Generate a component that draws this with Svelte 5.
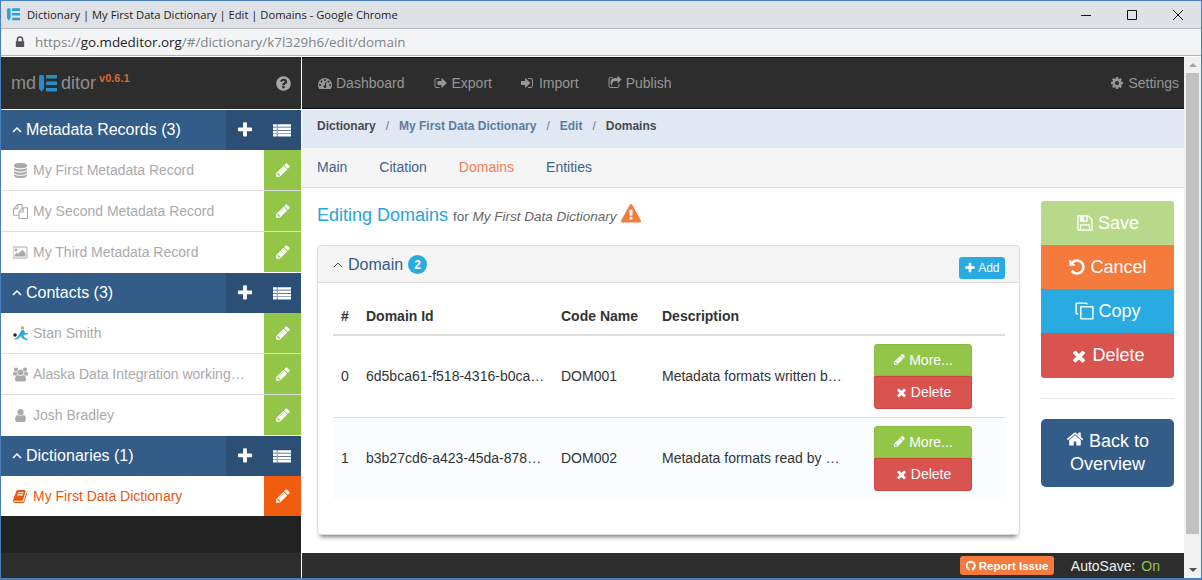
<script>
	// font awesome 4 shapes, 1792 grid unless noted
	const icons = {
		plus: 'M1600 736v192q0 40-28 68t-68 28h-416v416q0 40-28 68t-68 28h-192q-40 0-68-28t-28-68v-416h-416q-40 0-68-28t-28-68v-192q0-40 28-68t68-28h416v-416q0-40 28-68t68-28h192q40 0 68 28t28 68v416h416q40 0 68 28t28 68z',
		times: 'M1490 1322q0 40-28 68l-136 136q-28 28-68 28t-68-28l-294-294-294 294q-28 28-68 28t-68-28l-136-136q-28-28-28-68t28-68l294-294-294-294q-28-28-28-68t28-68l136-136q28-28 68-28t68 28l294 294 294-294q28-28 68-28t68 28l136 136q28 28 28 68t-28 68l-294 294 294 294q28 28 28 68z',
		pencil: 'M491 1536l91-91-235-235-91 91v107h128v128h107zm523-928q0-22-22-22-10 0-17 7l-542 542q-7 7-7 17 0 22 22 22 10 0 17-7l542-542q7-7 7-17zm-54-192l416 416-832 832h-416v-416zm683 96q0 53-37 90l-166 166-416-416 166-165q36-38 90-38 53 0 91 38l235 234q37 39 37 91z',
		home: 'M1472 992v480q0 26-19 45t-45 19h-384v-384h-256v384h-384q-26 0-45-19t-19-45v-480q0-1 .5-3t.5-3l575-474 575 474q1 2 1 6zm223-69l-62 74q-8 9-21 11h-3q-13 0-21-7l-692-577-692 577q-12 8-24 7-13-2-21-11l-62-74q-8-10-7-23.5t11-21.5l719-599q32-26 76-26t76 26l244 204v-195q0-14 9-23t23-9h192q14 0 23 9t9 23v408l219 182q10 8 11 21.5t-7 23.5z',
		warning: 'M1024 1375v-190q0-14-9.5-23.5t-22.5-9.5h-192q-13 0-22.5 9.5t-9.5 23.5v190q0 14 9.5 23.5t22.5 9.5h192q13 0 22.5-9.5t9.5-23.5zm-2-374l18-459q0-12-10-19-13-11-24-11h-220q-11 0-24 11-10 7-10 21l17 457q0 10 10 16.5t24 6.5h185q14 0 23.5-6.5t10.5-16.5zm-14-934l768 1408q35 63-2 126-17 29-46.5 46t-63.5 17h-1536q-34 0-63.5-17t-46.5-46q-37-63-2-126l768-1408q17-31 47-49t65-18 65 18 47 49z',
		user: 'M1536 1399q0 109-62.5 187t-150.5 78h-854q-88 0-150.5-78t-62.5-187q0-85 8.5-160.5t31.5-152 58.5-131 94-89 134.5-34.5q131 128 313 128t313-128q76 0 134.5 34.5t94 89 58.5 131 31.5 152 8.5 160.5zm-256-887q0 159-112.5 271.5t-271.5 112.5-271.5-112.5-112.5-271.5 112.5-271.5 271.5-112.5 271.5 112.5 112.5 271.5z',
		question: 'M1024 1376v-192q0-14-9-23t-23-9h-192q-14 0-23 9t-9 23v192q0 14 9 23t23 9h192q14 0 23-9t9-23zm256-672q0-88-55.5-163t-138.5-116-170-41q-243 0-371 213-15 24 8 42l132 100q7 6 19 6 16 0 25-12 53-68 86-92 34-24 86-24 48 0 85.5 26t37.5 59q0 38-20 61t-68 45q-63 28-115.5 86.5t-52.5 125.5v36q0 14 9 23t23 9h192q14 0 23-9t9-23q0-19 21.5-49.5t54.5-49.5q32-18 49-28.5t46-35 44.5-48 28-60.5 12.5-81zm384 192q0 209-103 385.5t-279.5 279.5-385.5 103-385.5-103-279.5-279.5-103-385.5 103-385.5 279.5-279.5 385.5-103 385.5 103 279.5 279.5 103 385.5z',
		database: 'M896 768q237 0 443-43t325-127v170q0 69-103 128t-280 93.5-385 34.5-385-34.5-280-93.5-103-128v-170q119 84 325 127t443 43zm0 768q237 0 443-43t325-127v170q0 69-103 128t-280 93.5-385 34.5-385-34.5-280-93.5-103-128v-170q119 84 325 127t443 43zm0-384q237 0 443-43t325-127v170q0 69-103 128t-280 93.5-385 34.5-385-34.5-280-93.5-103-128v-170q119 84 325 127t443 43zm0-1152q208 0 385 34.5t280 93.5 103 128v128q0 69-103 128t-280 93.5-385 34.5-385-34.5-280-93.5-103-128v-128q0-69 103-128t280-93.5 385-34.5z',
		undo: 'M1664 896q0 156-61 298t-164 245-245 164-298 61q-172 0-327-72.5t-264-204.5q-7-10-6.5-22.5t8.5-20.5l137-138q10-9 25-9 16 2 23 12 73 95 179 147t225 52q104 0 198.5-40.5t163.5-109.5 109.5-163.5 40.5-198.5-40.5-198.5-109.5-163.5-163.5-109.5-198.5-40.5q-98 0-188 35.5t-160 101.5l137 138q31 30 14 69-17 40-59 40h-448q-26 0-45-19t-19-45v-448q0-42 40-59 39-17 69 14l130 129q107-101 244.5-156.5t284.5-55.5q156 0 298 61t245 164 164 245 61 298z',
		book: 'M1639 478q40 57 18 129l-275 906q-19 64-76.5 107.5t-122.5 43.5h-923q-77 0-148.5-53.5t-99.5-131.5q-24-67-2-127 0-4 3-27t4-37q1-8-3-21.5t-3-19.5q2-11 8-21t16.5-23.5 16.5-23.5q23-38 45-91.5t30-91.5q3-10 .5-30t-.5-28q3-11 17-28t17-23q21-36 42-92t25-90q1-9-2.5-32t.5-28q4-13 22-30.5t22-22.5q19-26 42.5-84.5t27.5-96.5q1-8-3-25.5t-2-26.5q2-8 9-18t18-23 17-21q8-12 16.5-30.5t15-35 16-36 19.5-32 26.5-23.5 36-11.5 47.5 5.5l-1 3q38-9 51-9h761q74 0 114 56t18 130l-274 906q-36 119-71.5 153.5t-128.5 34.5h-869q-27 0-38 15-11 16-1 43 24 70 144 70h923q29 0 56-15.5t35-41.5l300-987q7-22 5-57 38 15 59 43zm-1064 2q-4 13 2 22.5t20 9.5h608q13 0 25.5-9.5t16.5-22.5l21-64q4-13-2-22.5t-20-9.5h-608q-13 0-25.5 9.5t-16.5 22.5zm-83 256q-4 13 2 22.5t20 9.5h608q13 0 25.5-9.5t16.5-22.5l21-64q4-13-2-22.5t-20-9.5h-608q-13 0-25.5 9.5t-16.5 22.5z',
		cog: 'M1152 896q0-106-75-181t-181-75-181 75-75 181 75 181 181 75 181-75 75-181zm512-109v222q0 12-8 23t-20 13l-185 28q-19 54-39 91 35 50 107 138 10 12 10 25t-9 23q-27 37-99 108t-94 71q-12 0-26-9l-138-108q-44 23-91 38-16 136-29 186-7 28-36 28h-222q-14 0-24.5-8.5t-11.5-21.5l-28-184q-49-16-90-37l-141 107q-10 9-25 9-14 0-25-11-126-114-165-168-7-10-7-23 0-12 8-23 15-21 51-66.5t54-70.5q-27-50-41-99l-183-27q-13-2-21-12.5t-8-23.5v-222q0-12 8-23t19-13l186-28q14-46 39-92-40-57-107-138-10-12-10-24 0-10 9-23 26-36 98.5-107.5t94.5-71.5q13 0 26 10l138 107q44-23 91-38 16-136 29-186 7-28 36-28h222q14 0 24.5 8.5t11.5 21.5l28 184q49 16 90 37l142-107q9-9 24-9 13 0 25 10 129 119 165 170 7 8 7 22 0 12-8 23-15 21-51 66.5t-54 70.5q26 50 41 98l183 28q13 2 21 12.5t8 23.5z',
		dashboard: 'M384 1152q0-53-37.5-90.5t-90.5-37.5-90.5 37.5-37.5 90.5 37.5 90.5 90.5 37.5 90.5-37.5 37.5-90.5zm192-448q0-53-37.5-90.5t-90.5-37.5-90.5 37.5-37.5 90.5 37.5 90.5 90.5 37.5 90.5-37.5 37.5-90.5zm428 481l101-382q6-26-7.5-48.5t-38.5-29.5-48 6.5-30 39.5l-101 382q-60 5-107 43.5t-63 98.5q-20 77 20 146t117 89 146-20 89-117q16-60-6-117t-72-91zm660-33q0-53-37.5-90.5t-90.5-37.5-90.5 37.5-37.5 90.5 37.5 90.5 90.5 37.5 90.5-37.5 37.5-90.5zm-640-640q0-53-37.5-90.5t-90.5-37.5-90.5 37.5-37.5 90.5 37.5 90.5 90.5 37.5 90.5-37.5 37.5-90.5zm448 192q0-53-37.5-90.5t-90.5-37.5-90.5 37.5-37.5 90.5 37.5 90.5 90.5 37.5 90.5-37.5 37.5-90.5zm320 448q0 261-141 483-19 29-54 29h-1402q-35 0-54-29-141-221-141-483 0-182 71-348t191-286 286-191 348-71 348 71 286 191 191 286 71 348z',
		signout: 'M704 1440q0 4 1 20t.5 26.5-3 23.5-10 19.5-20.5 6.5h-320q-119 0-203.5-84.5t-84.5-203.5v-704q0-119 84.5-203.5t203.5-84.5h320q13 0 22.5 9.5t9.5 22.5q0 4 1 20t.5 26.5-3 23.5-10 19.5-20.5 6.5h-320q-66 0-113 47t-47 113v704q0 66 47 113t113 47h312l11.5 1 11.5 3 8 5.5 7 9 2 13.5zm928-544q0 26-19 45l-544 544q-19 19-45 19t-45-19-19-45v-288h-448q-26 0-45-19t-19-45v-384q0-26 19-45t45-19h448v-288q0-26 19-45t45-19 45 19l544 544q19 19 19 45z',
		signin: 'M1184 896q0 26-19 45l-544 544q-19 19-45 19t-45-19-19-45v-288h-448q-26 0-45-19t-19-45v-384q0-26 19-45t45-19h448v-288q0-26 19-45t45-19 45 19l544 544q19 19 19 45zm352-352v704q0 119-84.5 203.5t-203.5 84.5h-320q-13 0-22.5-9.5t-9.5-22.5q0-4-1-20t-.5-26.5 3-23.5 10-19.5 20.5-6.5h320q66 0 113-47t47-113v-704q0-66-47-113t-113-47h-312l-11.5-1-11.5-3-8-5.5-7-9-2-13.5q0-4-1-20t-.5-26.5 3-23.5 10-19.5 20.5-6.5h320q119 0 203.5 84.5t84.5 203.5z',
		share: 'M1472 989v259q0 119-84.5 203.5t-203.5 84.5h-832q-119 0-203.5-84.5t-84.5-203.5v-832q0-119 84.5-203.5t203.5-84.5h255q13 0 22.5 9.5t9.5 22.5q0 27-26 32-77 26-133 60-10 4-16 4h-112q-66 0-113 47t-47 113v832q0 66 47 113t113 47h832q66 0 113-47t47-113v-214q0-19 18-29 28-13 54-37 16-16 35-8 21 9 21 29zm237-496l-384 384q-18 19-45 19-12 0-25-5-39-17-39-59v-192h-160q-323 0-438 131-119 137-74 473 3 23-20 34-8 2-12 2-16 0-26-13-10-14-21-31t-39.5-68.5-49.5-99.5-38.5-114-17.5-122q0-49 3.5-91t14-90 28-88 47-81.5 68.5-74 94.5-61.5 124.5-48.5 159.5-30.5 196.5-11h160v-192q0-42 39-59 13-5 25-5 26 0 45 19l384 384q19 19 19 45t-19 45z',
		files: 'M1696 384q40 0 68 28t28 68v1216q0 40-28 68t-68 28h-960q-40 0-68-28t-28-68v-288h-544q-40 0-68-28t-28-68v-672q0-40 20-88t48-76l408-408q28-28 76-48t88-20h416q40 0 68 28t28 68v328q68-40 128-40h416zm-544 213l-299 299h299v-299zm-640-384l-299 299h299v-299zm196 647l316-316v-416h-384v416q0 40-28 68t-68 28h-416v640h512v-256q0-40 20-88t48-76zm956 804v-1152h-384v416q0 40-28 68t-68 28h-416v640h896z',
		floppy: 'M512 1536h768v-384h-768v384zm896 0h128v-896q0-14-10-38.5t-20-34.5l-281-281q-10-10-34-20t-39-10v416q0 40-28 68t-68 28h-576q-40 0-68-28t-28-68v-416h-128v1280h128v-416q0-40 28-68t68-28h832q40 0 68 28t28 68v416zm-384-928v-320q0-13-9.5-22.5t-22.5-9.5h-192q-13 0-22.5 9.5t-9.5 22.5v320q0 13 9.5 22.5t22.5 9.5h192q13 0 22.5-9.5t9.5-22.5zm640 32v928q0 40-28 68t-68 28h-1344q-40 0-68-28t-28-68v-1344q0-40 28-68t68-28h928q40 0 88 20t76 48l280 280q28 28 48 76t20 88z',
		github: 'M896 128q209 0 385.5 103t279.5 279.5 103 385.5q0 251-146.5 451.5t-378.5 277.5q-27 5-40-7t-13-30q0-3 .5-76.5t.5-134.5q0-97-52-142 57-6 102.5-18t94-39 81-66.5 53-105 20.5-150.5q0-119-79-206 37-91-8-204-28-9-81 11t-92 44l-38 24q-93-26-192-26t-192 26q-16-11-42.5-27t-83.5-38.5-85-13.5q-45 113-8 204-79 87-79 206 0 85 20.5 150t52.5 105 80.5 67 94 39 102.5 18q-39 36-49 103-21 10-45 15t-57 5-65.5-21.5-55.5-62.5q-19-32-48.5-52t-49.5-24l-20-3q-21 0-29 4.5t-5 11.5 9 14 13 12l7 5q22 10 43.5 38t31.5 51l10 23q13 38 44 61.5t67 30 69.5 7 55.5-3.5l23-4q0 38 .5 88.5t.5 54.5q0 18-13 30t-40 7q-232-77-378.5-277.5t-146.5-451.5q0-209 103-385.5t279.5-279.5 385.5-103z',
		users: 'M593 896q-162 5-265 128h-134q-82 0-138-40.5t-56-118.5q0-353 124-353 6 0 43.5 21t97.5 42.5 119 21.5q67 0 133-23-5 37-5 66 0 139 81 256zm1071 637q0 120-73 189.5t-194 69.5h-874q-121 0-194-69.5t-73-189.5q0-53 3.5-103.5t14-109 26.5-108.5 43-97.5 62-81 85.5-53.5 111.5-20q10 0 43 21.5t73 48 107 48 135 21.5 135-21.5 107-48 73-48 43-21.5q61 0 111.5 20t85.5 53.5 62 81 43 97.5 26.5 108.5 14 109 3.5 103.5zm-1024-1277q0 106-75 181t-181 75-181-75-75-181 75-181 181-75 181 75 75 181zm704 384q0 159-112.5 271.5t-271.5 112.5-271.5-112.5-112.5-271.5 112.5-271.5 271.5-112.5 271.5 112.5 112.5 271.5zm576 225q0 78-56 118.5t-138 40.5h-134q-103-123-265-128 81-117 81-256 0-29-5-66 66 23 133 23 59 0 119-21.5t97.5-42.5 43.5-21q124 0 124 353zm-128-609q0 106-75 181t-181 75-181-75-75-181 75-181 181-75 181 75 75 181z',
		picture: 'M576 576q0 80-56 136t-136 56-136-56-56-136 56-136 136-56 136 56 56 136zm1024 384v448h-1408v-192l320-320 160 160 512-512zm96-704h-1600q-13 0-22.5 9.5t-9.5 22.5v1216q0 13 9.5 22.5t22.5 9.5h1600q13 0 22.5-9.5t9.5-22.5v-1216q0-13-9.5-22.5t-22.5-9.5zm160 32v1216q0 66-47 113t-113 47h-1600q-66 0-113-47t-47-113v-1216q0-66 47-113t113-47h1600q66 0 113 47t47 113z',
		list: 'M0 320h1792v256h-1792zM0 640h1792v256h-1792zM0 960h1792v256h-1792zM0 1280h1792v256h-1792zM384 320v1216h64v-1216z',
		copy: 'M640 448h1024q96 0 96 96v1024q0 96-96 96h-1024q-96 0-96-96v-1024q0-96 96-96zm32 128v960h960v-960zM384 1216h-128q-128 0-128-128v-832q0-128 128-128h832q128 0 128 128v64h-128v-64q0-16-16-16h-800q-16 0-16 16v800q0 32 32 32h96z'
	};
	const wide = ['users', 'picture'];

	const groups = [
		{
			title: 'Metadata Records (3)',
			items: [
				{ icon: 'database', text: 'My First Metadata Record' },
				{ icon: 'files', text: 'My Second Metadata Record' },
				{ icon: 'picture', text: 'My Third Metadata Record' }
			]
		},
		{
			title: 'Contacts (3)',
			items: [
				{ icon: 'runner', text: 'Stan Smith' },
				{ icon: 'users', text: 'Alaska Data Integration working…' },
				{ icon: 'user', text: 'Josh Bradley' }
			]
		},
		{
			title: 'Dictionaries (1)',
			items: [{ icon: 'book', text: 'My First Data Dictionary', active: true }]
		}
	];

	const nav = [
		{ icon: 'dashboard', text: 'Dashboard' },
		{ icon: 'signout', text: 'Export' },
		{ icon: 'signin', text: 'Import' },
		{ icon: 'share', text: 'Publish' }
	];

	const domains = [
		{ id: '6d5bca61-f518-4316-b0ca…', code: 'DOM001', desc: 'Metadata formats written b…' },
		{ id: 'b3b27cd6-a423-45da-878…', code: 'DOM002', desc: 'Metadata formats read by …' }
	];
</script>

{#snippet fa(name)}
	<svg class="fa" viewBox={wide.includes(name) ? '0 0 1920 1792' : '0 0 1792 1792'} aria-hidden="true">
		<path d={icons[name]} fill-rule={name === 'list' ? 'evenodd' : 'nonzero'} />
	</svg>
{/snippet}

{#snippet logo()}
	<svg class="logo" viewBox="0 0 18 17" aria-hidden="true">
		<path d="M0 1.5q0-1.5 1.5-1.5h2q1.5 0 1.5 1.5v12l-2.5 3.500-2.500-3.500z" />
		<path d="M7 0h11v3.500h-11zM7 6.500h11v3.500h-11zM7 13h11v3.500h-11z" />
	</svg>
{/snippet}

{#snippet chevron()}
	<svg class="chev" viewBox="0 0 10 6" aria-hidden="true">
		<path d="M1 5l4-4 4 4" />
	</svg>
{/snippet}

<div class="window">
	<div class="titlebar">
		<span class="favicon">{@render logo()}</span>
		<span class="wintitle">Dictionary | My First Data Dictionary | Edit | Domains - Google Chrome</span>
		<div class="winctl">
			<svg viewBox="0 0 12 12"><path d="M1 6.500h10" /></svg>
			<svg viewBox="0 0 12 12"><path d="M1.500 1.500h9v9h-9z" /></svg>
			<svg viewBox="0 0 12 12"><path d="M1 1l10 10M11 1l-10 10" /></svg>
		</div>
	</div>
	<div class="urlbar">
		<svg class="lock" viewBox="0 0 12 14"><path d="M2 6v-2a4 4 0 0 1 8 0v2h1v7h-10v-7zM3.800 6h4.400v-2a2.200 2.200 0 0 0-4.400 0z" /></svg>
		<span class="url"><span class="u-scheme">https://</span><span class="u-host">go.mdeditor.org</span>/#/dictionary/k7l329h6/edit/domain</span>
	</div>

	<div class="app">
		<aside class="sidebar">
			<div class="brand">
				<span class="md">md</span>
				{@render logo()}
				<span class="md">ditor</span>
				<sup class="ver">v0.6.1</sup>
				<span class="help">{@render fa('question')}</span>
			</div>
			{#each groups as group}
				<div class="group-head">
					<div class="group-title">{@render chevron()}{group.title}</div>
					<div class="group-act">
						<span>{@render fa('plus')}</span>
						<span>{@render fa('list')}</span>
					</div>
				</div>
				<ul class="items">
					{#each group.items as item}
						<li class="item" class:active={item.active}>
							<span class="item-icon">
								{#if item.icon === 'runner'}
									<svg class="runner" viewBox="0 0 15 15" aria-hidden="true">
										<circle cx="9.500" cy="2" r="1.700" fill="#e8a06a" />
										<path d="M8 4.500l3-.5 1 3 3-.2v1.200l-4.500 1 .5 2 4 2.500-1 1-5.500-2.500-.5-2-3 3-3.500.5v-1l2.500-1 3-4.500z" fill="#29abe2" />
										<circle cx="2" cy="9" r="1.800" fill="#222" />
									</svg>
								{:else}
									{@render fa(item.icon)}
								{/if}
							</span>
							<span class="item-text">{item.text}</span>
							<span class="item-edit">{@render fa('pencil')}</span>
						</li>
					{/each}
				</ul>
			{/each}
			<div class="side-fill"></div>
			<div class="side-foot"></div>
		</aside>

		<div class="main">
			<nav class="topnav">
				{#each nav as n}
					<span class="navlink">{@render fa(n.icon)}{n.text}</span>
				{/each}
				<span class="navlink settings">{@render fa('cog')}Settings</span>
			</nav>

			<div class="crumbs">
				<span>Dictionary</span><i>/</i>
				<span class="lnk">My First Data Dictionary</span><i>/</i>
				<span class="lnk">Edit</span><i>/</i>
				<span>Domains</span>
			</div>

			<div class="tabs">
				<span>Main</span>
				<span>Citation</span>
				<span class="on">Domains</span>
				<span>Entities</span>
			</div>

			<div class="content">
				<div class="left">
					<h3 class="heading">
						Editing Domains <small>for <em>My First Data Dictionary</em></small>
						<span class="warn">{@render fa('warning')}</span>
					</h3>

					<section class="card">
						<header class="card-head">
							{@render chevron()}
							<span class="card-title">Domain</span>
							<span class="badge">2</span>
							<span class="add">{@render fa('plus')}Add</span>
						</header>
						<table>
							<thead>
								<tr>
									<th class="c-n">#</th>
									<th class="c-id">Domain Id</th>
									<th class="c-code">Code Name</th>
									<th class="c-desc">Description</th>
									<th></th>
								</tr>
							</thead>
							<tbody>
								{#each domains as d, i}
									<tr>
										<td class="c-n">{i}</td>
										<td>{d.id}</td>
										<td>{d.code}</td>
										<td>{d.desc}</td>
										<td class="c-btn">
											<span class="mini green">{@render fa('pencil')}More...</span>
											<span class="mini red">{@render fa('times')}Delete</span>
										</td>
									</tr>
								{/each}
							</tbody>
						</table>
					</section>
				</div>

				<div class="right">
					<div class="stack">
						<span class="sbtn save">{@render fa('floppy')}Save</span>
						<span class="sbtn cancel">{@render fa('undo')}Cancel</span>
						<span class="sbtn copy">{@render fa('copy')}Copy</span>
						<span class="sbtn del">{@render fa('times')}Delete</span>
					</div>
					<hr />
					<div class="back">{@render fa('home')} Back to Overview</div>
				</div>
			</div>

			<footer class="foot">
				<span class="report">{@render fa('github')}Report Issue</span>
				<span class="autosave">AutoSave: <b>On</b></span>
			</footer>
		</div>

		<div class="scroll">
			<span class="arrow up"></span>
			<span class="thumb"></span>
			<span class="arrow down"></span>
		</div>
	</div>
</div>

<style>
	:global(body) {
		margin: 0;
		overflow: hidden;
	}

	.window {
		width: 1202px;
		height: 580px;
		box-sizing: border-box;
		border: 1px solid #4a7ebb;
		border-bottom-width: 2px;
		display: flex;
		flex-direction: column;
		font-family: 'Liberation Sans', Arial, sans-serif;
		font-size: 14px;
		color: #333;
		background: #fff;
		overflow: hidden;
	}

	.fa {
		width: 1em;
		height: 1em;
		fill: currentColor;
		flex: none;
	}

	/* chrome */
	.titlebar {
		height: 27px;
		flex: none;
		display: flex;
		align-items: center;
		background: #dee1e6;
		border-bottom: 1px solid #b4b4b4;
		padding-left: 6px;
	}
	.favicon {
		display: flex;
		color: #29a0d8;
	}
	.favicon .logo {
		width: 13px;
		height: 13px;
		margin: 0;
	}
	.wintitle {
		margin-left: 7px;
		font-family: 'Open Sans', sans-serif;
		font-size: 11.2px;
		color: #222;
		white-space: nowrap;
	}
	.winctl {
		margin-left: auto;
		display: flex;
		gap: 34px;
		padding-right: 17px;
	}
	.winctl svg {
		width: 12px;
		height: 12px;
		fill: none;
		stroke: #111;
		stroke-width: 1;
	}
	.urlbar {
		height: 26px;
		flex: none;
		display: flex;
		align-items: center;
		background: #f3f4f6;
		border-bottom: 1px solid #b4b4b4;
		padding-left: 14px;
	}
	.lock {
		width: 10px;
		height: 12px;
		fill: #555;
	}
	.url {
		margin-left: 10px;
		font-family: 'Open Sans', sans-serif;
		font-size: 13.4px;
		color: #7f8487;
		white-space: nowrap;
	}
	.u-scheme {
		color: #7c7f82;
	}
	.u-host {
		color: #222;
	}

	.app {
		flex: 1;
		min-height: 0;
		display: flex;
		border-top: 1px solid #fff;
	}

	/* sidebar */
	.sidebar {
		width: 300px;
		flex: none;
		display: flex;
		flex-direction: column;
		background: #222;
		border-right: 1px solid #fff;
	}
	.brand {
		height: 53px;
		flex: none;
		box-sizing: border-box;
		background: #2d2d2d;
		border-bottom: 1px solid #fff;
		display: flex;
		align-items: center;
		padding: 0 10px;
		color: #8f8f8f;
	}
	.md {
		font-size: 18px;
	}
	.brand .logo {
		width: 18px;
		height: 17px;
		margin: 1px 4px 0 3px;
		color: #2a8cc4;
	}
	.logo {
		fill: currentColor;
	}
	.ver {
		align-self: flex-start;
		margin: 16px 0 0 3px;
		font-size: 11px;
		font-weight: bold;
		line-height: 1;
		color: #d9692e;
	}
	.help {
		margin-left: auto;
		margin-right: -1px;
		display: flex;
		font-size: 17px;
		color: #a6a6a6;
	}
	.group-head {
		height: 40px;
		flex: none;
		display: flex;
		background: #335c88;
		color: #fff;
	}
	.group-title {
		flex: 1;
		display: flex;
		align-items: center;
		font-size: 16px;
		padding-left: 11px;
	}
	.chev {
		width: 10px;
		height: 6px;
		margin-right: 4px;
		fill: none;
		stroke: currentColor;
		stroke-width: 1.500;
	}
	.group-act {
		width: 75px;
		display: flex;
		background: #2b4f75;
		align-items: center;
		font-size: 18px;
	}
	.group-act span {
		flex: 1;
		display: flex;
		justify-content: center;
	}
	.items {
		list-style: none;
		margin: 0;
		padding: 0;
		flex: none;
		background: #fff;
	}
	.item {
		height: 40px;
		display: flex;
		align-items: center;
		color: #aaa;
		border-bottom: 1px solid #ddd;
	}
	.item:last-child {
		border-bottom-color: #fff;
	}
	.item.active {
		border-bottom: 0;
		color: #e8590f;
	}
	.item-icon {
		width: 27px;
		display: flex;
		justify-content: flex-end;
		font-size: 15px;
	}
	.runner {
		width: 15px;
		height: 15px;
	}
	.item-text {
		flex: 1;
		margin-left: 5px;
		white-space: nowrap;
	}
	.item-edit {
		width: 37px;
		height: 40px;
		display: flex;
		align-items: center;
		justify-content: center;
		background: #93c548;
		color: #fff;
		font-size: 16px;
	}
	.active .item-edit {
		background: #f25c0f;
	}
	.side-fill {
		flex: 1;
	}
	.side-foot {
		height: 25px;
		flex: none;
		background: #2d2d2d;
	}

	/* main */
	.main {
		flex: 1;
		min-width: 0;
		display: flex;
		flex-direction: column;
	}
	.topnav {
		height: 53px;
		flex: none;
		box-sizing: border-box;
		background: #2d2d2d;
		border-top: 1px solid #111;
		border-bottom: 1px solid #fff;
		box-shadow: inset 0 -1px #111;
		display: flex;
		align-items: center;
		gap: 29px;
		padding: 0 5px 2px 16px;
		color: #969696;
	}
	.navlink {
		display: flex;
		align-items: center;
		gap: 4px;
	}
	.settings {
		margin-left: auto;
	}
	.crumbs {
		height: 38px;
		flex: none;
		box-sizing: border-box;
		padding-bottom: 6px;
		background: #dfe8f3;
		display: flex;
		align-items: center;
		padding-left: 15px;
		font-size: 12px;
		font-weight: bold;
		color: #4a4a4a;
	}
	.crumbs i {
		font-style: normal;
		font-weight: normal;
		color: #777;
		margin: 0 10px;
	}
	.crumbs .lnk {
		color: #5a7da3;
	}
	.tabs {
		height: 40px;
		flex: none;
		box-sizing: border-box;
		background: #f5f5f5;
		border-bottom: 1px solid #ddd;
		display: flex;
		align-items: center;
		gap: 32px;
		padding: 0 0 2px 15px;
		color: #3d648c;
	}
	.tabs .on {
		color: #f47b4f;
	}
	.content {
		flex: 1;
		min-height: 0;
		display: flex;
		gap: 21px;
		padding-left: 15px;
		padding-right: 10px;
	}
	.left {
		flex: 1;
		min-width: 0;
	}
	.heading {
		margin: 16px 0 0;
		height: 41px;
		display: flex;
		align-items: flex-start;
		font-size: 18px;
		font-weight: normal;
		line-height: 22px;
		color: #29a3dc;
		white-space: pre-wrap;
	}
	.heading small {
		font-size: 13.500px;
		line-height: 25px;
		color: #666;
	}
	.warn {
		font-size: 20px;
		margin-left: 4px;
		display: flex;
		color: #f47b3c;
	}
	.card {
		height: 290px;
		box-sizing: border-box;
		border: 1px solid #ddd;
		border-radius: 4px;
		box-shadow: 0 5px 4px -3px rgba(0, 0, 0, 0.5);
	}
	.card-head {
		height: 37px;
		box-sizing: border-box;
		background: #f5f5f5;
		border-bottom: 1px solid #ddd;
		border-radius: 4px 4px 0 0;
		display: flex;
		align-items: center;
		padding: 1px 14px 0 15px;
		color: #335c88;
	}
	.card-head .chev {
		margin-right: 5px;
		stroke-width: 1;
	}
	.card-title {
		font-size: 16px;
	}
	.badge {
		margin-left: 5px;
		width: 19px;
		height: 19px;
		border-radius: 50%;
		background: #29abe2;
		color: #fff;
		font-size: 12px;
		font-weight: bold;
		display: flex;
		align-items: center;
		justify-content: center;
	}
	.add {
		margin-left: auto;
		margin-top: 6px;
		height: 22px;
		padding: 0 5.500px;
		box-sizing: border-box;
		background: #29abe2;
		border-radius: 3px;
		color: #fff;
		font-size: 12px;
		display: flex;
		align-items: center;
		gap: 2px;
	}
	table {
		border-collapse: collapse;
		table-layout: fixed;
		width: 672px;
		margin: 15px 15px 0;
	}
	th {
		height: 37px;
		padding: 0 8px;
		box-sizing: border-box;
		text-align: left;
		border-bottom: 2px solid #ddd;
		white-space: nowrap;
	}
	th.c-n {
		width: 25px;
	}
	th.c-id {
		width: 195px;
	}
	th.c-code {
		width: 101px;
	}
	th.c-desc {
		width: 212px;
	}
	td {
		height: 82px;
		padding: 0 8px;
		box-sizing: border-box;
		white-space: nowrap;
		vertical-align: middle;
	}
	tbody tr + tr td {
		border-top: 1px solid #ddd;
		background: #f9fdff;
	}
	.c-btn {
		padding: 0 0 0 8px;
	}
	.mini {
		width: 98px;
		height: 32px;
		box-sizing: border-box;
		display: flex;
		align-items: center;
		justify-content: center;
		gap: 3px;
		color: #fff;
	}
	.mini.green {
		background: #93c548;
		border: 1px solid #8bbb42;
		border-radius: 3px 3px 0 0;
	}
	.mini.red {
		height: 33px;
		background: #d9534f;
		border: 1px solid #d0443f;
		border-radius: 0 0 3px 3px;
	}
	.mini .fa {
		font-size: 13px;
	}

	.right {
		width: 133px;
		flex: none;
		padding-top: 13px;
	}
	.stack {
		display: flex;
		flex-direction: column;
		border-radius: 3px;
		overflow: hidden;
	}
	.sbtn {
		height: 44px;
		display: flex;
		align-items: center;
		justify-content: center;
		gap: 4px;
		font-size: 18px;
		color: #fff;
	}
	.sbtn.save {
		background: #b9d98a;
	}
	.sbtn.cancel {
		background: #f47b3c;
	}
	.sbtn.copy {
		background: #29abe2;
	}
	.sbtn.copy .fa {
		font-size: 20px;
	}
	.sbtn.del {
		height: 45px;
		background: #d9534f;
	}
	hr {
		border: 0;
		border-top: 1px solid #e8e8e8;
		margin: 20px 0;
	}
	.back {
		box-sizing: border-box;
		height: 68px;
		padding: 11px 8px;
		border-radius: 5px;
		background: #335c88;
		color: #fff;
		font-size: 18px;
		line-height: 23px;
		text-align: center;
	}
	.back .fa {
		vertical-align: -1px;
	}

	.foot {
		height: 25px;
		flex: none;
		background: #2d2d2d;
		display: flex;
		align-items: center;
		justify-content: flex-end;
		padding-right: 24px;
		gap: 17px;
	}
	.report {
		height: 19px;
		width: 94px;
		justify-content: center;
		box-sizing: border-box;
		background: #f47b3c;
		border-radius: 3px;
		color: #fff;
		font-size: 11.500px;
		font-weight: bold;
		display: flex;
		align-items: center;
		gap: 2px;
		white-space: nowrap;
	}
	.autosave {
		color: #f0f0f0;
		word-spacing: 2px;
	}
	.autosave b {
		font-weight: normal;
		color: #93c548;
	}

	/* scrollbar */
	.scroll {
		width: 17px;
		flex: none;
		background: #f1f1f1;
		display: flex;
		flex-direction: column;
		align-items: center;
	}
	.thumb {
		width: 13px;
		height: 461px;
		background: #c1c1c1;
	}
	.arrow {
		width: 0;
		height: 0;
		border: 4px solid transparent;
		margin: 6px 0;
	}
	.arrow.up {
		border-top: 0;
		border-bottom: 4px solid #a3a3a3;
	}
	.arrow.down {
		margin-top: auto;
		border-bottom: 0;
		border-top: 4px solid #505050;
	}
</style>
